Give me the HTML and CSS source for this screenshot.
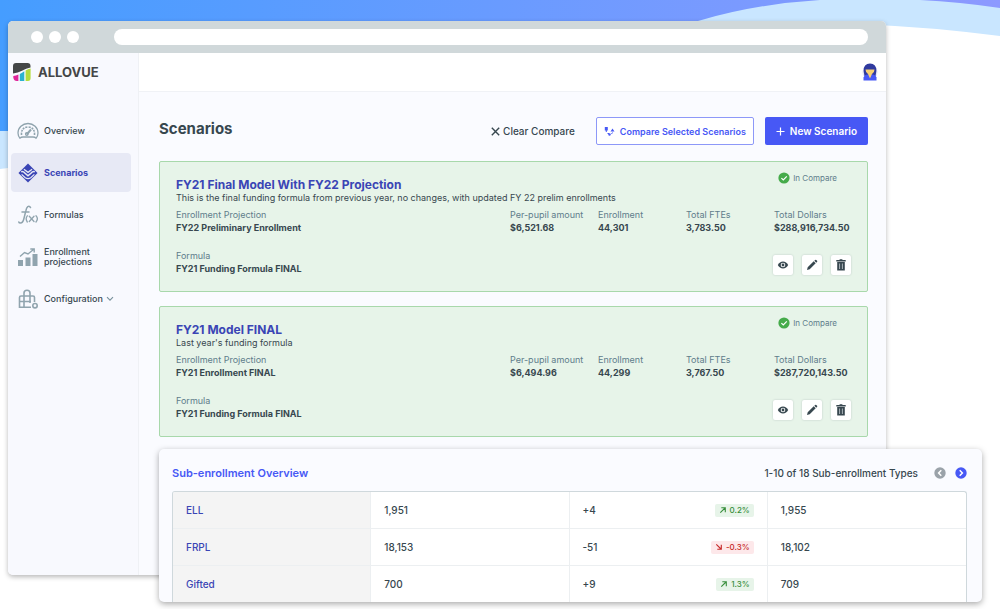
FILE: index.html
```html
<!DOCTYPE html>
<html lang="en">
<head>
<meta charset="utf-8">
<title>Allovue - Scenarios</title>
<link rel="stylesheet" href="styles.css">
</head>
<body>
<svg class="defs" width="0" height="0" aria-hidden="true">
  <symbol id="i-check" viewBox="0 0 12 12"><circle cx="6" cy="6" r="5.6" fill="#45ab4a"/><path d="M3.4 6.1l1.9 1.9 3.5-3.7" fill="none" stroke="#fff" stroke-width="1.2"/></symbol>
  <symbol id="i-eye" viewBox="0 0 12 12"><path d="M.8 6C2 3.700 3.800 2.500 6 2.500S10 3.700 11.200 6C10 8.300 8.200 9.500 6 9.500S2 8.300.8 6z" fill="#37474f"/><circle cx="6" cy="6" r="2.300" fill="#fff"/><circle cx="6" cy="6" r="1.400" fill="#37474f"/></symbol>
  <symbol id="i-pencil" viewBox="0 0 12 12"><path d="M1 11l.7-2.700 6-6 2 2-6 6zM8.300 1.700l.9-.8q.5-.4 1 0l.9.9q.5.5 0 1l-.8.900z" fill="#37474f"/></symbol>
  <symbol id="i-trash" viewBox="0 0 12 12"><path d="M1.300 1h3l.6-.7h2.200l.6.7h3v1.400H1.300z" fill="#37474f"/><path d="M2.200 3h7.600v8.500H2.200z" fill="#37474f"/><path d="M4.600 4.500v5.500M7.400 4.500v5.500" stroke="#b9c2c6" stroke-width=".9"/></symbol>
  <symbol id="i-up" viewBox="0 0 8 8"><path d="M1.300 6.700L6 2M2.300 1.800h4v4.400" fill="none" stroke="currentColor" stroke-width="1.100"/></symbol>
  <symbol id="i-down" viewBox="0 0 8 8"><path d="M1.300 1.300L6 6M2.300 6.200h4V1.800" fill="none" stroke="currentColor" stroke-width="1.100"/></symbol>
</svg>

<svg class="backdrop" viewBox="0 0 1000 180" preserveAspectRatio="none" aria-hidden="true">
  <defs><linearGradient id="sky" gradientUnits="userSpaceOnUse" x1="0" x2="1000" y1="0" y2="0"><stop offset="0" stop-color="#459dff"/><stop offset="1" stop-color="#8d99ff"/></linearGradient></defs>
  <path d="M0 0H1000V36Q930 27 860 24L600 100L8 168L0 169z" fill="#c9e6ff"/>
  <path d="M0 0H820Q755 4 698 21L500 100L8 131H0z" fill="url(#sky)"/>
  <path d="M920 0H1000V8Q960 2 920 0z" fill="url(#sky)"/>
</svg>

<div class="stage">
  <div class="window">
    <div class="chrome">
      <span class="dot"></span><span class="dot"></span><span class="dot"></span>
      <span class="address"></span>
    </div>
    <div class="app">
      <aside class="sidebar">
        <a class="logo" href="#">
          <svg width="18" height="18" viewBox="0 0 18 18" aria-hidden="true">
            <path d="M0 10.500V3Q0 0 3 0H14.500Q17.500 0 17.500 3V4.500Q13 5.500 9 7.800T0 10.500z" fill="#444647"/>
            <path d="M.3 13Q3 12.600 5.400 11.500V18H4Q.8 18 .3 14.500z" fill="#e0249a"/>
            <path d="M6.800 10.900Q9 9.800 11.300 8.300V18H6.800z" fill="#2bb3cf"/>
            <path d="M12.600 7.600Q15 6.200 17.600 5.600V15Q17.600 18 15 18H12.600z" fill="#b4dc3c"/>
          </svg>
          <span>ALLOVUE</span>
        </a>
        <nav class="nav">
          <a class="nav-item" href="#">
            <svg width="22" height="18" viewBox="0 0 22 18" aria-hidden="true" fill="none" stroke="#90a4ae" stroke-width="1.300">
              <path d="M3 16.200Q1 14 1 11A10 9.500 0 0 1 21 11Q21 14 19 16.200Q18 15 16 15H6Q4 15 3 16.200z"/>
              <path d="M4.500 13Q4 5.500 11 5Q18 5.500 17.500 13" stroke-width="1.600" stroke-dasharray="2 1"/>
              <path d="M9.700 12.500L14 7.500" stroke-width="2"/><circle cx="9.800" cy="12" r="1.300"/>
            </svg>
            <span>Overview</span>
          </a>
          <a class="nav-item active" href="#" aria-current="page">
            <svg width="22" height="20" viewBox="0 0 22 22" aria-hidden="true">
              <path d="M11 .5L21.500 11L11 21.500L.5 11z" fill="#3a45b5"/>
              <path d="M3.500 9.500Q6 9 7.500 11L11 14L14.500 11Q16 9 18.500 9.500" fill="none" stroke="#e7e9f5" stroke-width="1.700"/>
              <path d="M6.500 6.800L11 10.300L15.500 6.800" fill="none" stroke="#e7e9f5" stroke-width="1.400"/>
              <path d="M4 12.500L8 16.200Q11 18 14 16.200L18 12.500" fill="none" stroke="#e7e9f5" stroke-width="1.300"/>
            </svg>
            <span>Scenarios</span>
          </a>
          <a class="nav-item" href="#">
            <svg width="22" height="20" viewBox="0 0 22 20" aria-hidden="true" fill="none" stroke="#90a4ae" stroke-width="1.500" stroke-linecap="round">
              <path d="M13.500 2.500Q12.500 .8 10.800 1.600Q9.500 2.500 8.800 6L6.800 14Q5.800 18 3.500 18Q2 18 1.800 17M5 7H12"/>
              <path d="M10.300 10.800Q8 13.800 10.300 17M12.300 11.300L17 16.500M17 11.300L12.300 16.500M19 10.800Q21.800 13.800 19 17" stroke-width="1.300"/>
            </svg>
            <span>Formulas</span>
          </a>
          <a class="nav-item" href="#">
            <svg width="22" height="20" viewBox="0 0 22 20" aria-hidden="true" fill="#90a4ae">
              <path d="M1 13h5v6H1zM8.500 10.500h5V19h-5zM15.500 7h5v12h-5z"/>
              <path d="M3 9.500L7.500 5.500L11 7L16.500 2.500M13.300 2H17.200V5.500" fill="none" stroke="#90a4ae" stroke-width="1.400"/>
            </svg>
            <span>Enrollment projections</span>
          </a>
          <a class="nav-item" href="#">
            <svg width="22" height="20" viewBox="0 0 22 20" aria-hidden="true" fill="none" stroke="#90a4ae" stroke-width="1.600">
              <path d="M14 18.300H2.500V8.500Q2.500 7 4 7H16Q17.500 7 17.500 8.500V13M7 7V4Q7 1.200 10 1.200T13 4V7M2.500 12.500H14M7 18V7M13 14V7"/>
              <circle cx="18" cy="16.700" r="2.200"/>
            </svg>
            <span>Configuration</span>
            <svg class="chevron" width="8" height="6" viewBox="0 0 8 6" aria-hidden="true"><path d="M1 1.200L4 4.200L7 1.200" fill="none" stroke="#78909c" stroke-width="1.100"/></svg>
          </a>
        </nav>
      </aside>

      <div class="content">
        <header class="topbar">
          <button class="avatar" aria-label="Account">
            <svg width="16" height="18" viewBox="0 0 16 18" aria-hidden="true">
              <circle cx="8" cy="9" r="7.600" fill="#e4e6fa"/>
              <path d="M1.600 8Q1.500 .5 8 .5T14.400 8L13.500 13H2.500z" fill="#303a9e"/>
              <path d="M1.500 17.500V14.500Q2 12 5 11.500H11Q14 12 14.500 14.500V17.500z" fill="#4758f5"/>
              <path d="M3.500 6.500H12.500Q12.500 9.500 10 11L8 15.500L6 11Q3.500 9.500 3.500 6.500z" fill="#f6cf74"/>
            </svg>
          </button>
        </header>

        <main class="main">
          <div class="page-head">
            <h1>Scenarios</h1>
            <div class="actions">
              <button class="btn-text">
                <svg width="9" height="9" viewBox="0 0 9 9" aria-hidden="true"><path d="M.8 .8L8.200 8.200M8.200 .8L.8 8.200" stroke="#37474f" stroke-width="1.400"/></svg>
                Clear Compare
              </button>
              <button class="btn-outline">
                <svg width="11" height="11" viewBox="0 0 11 11" aria-hidden="true" fill="#4758f5"><path d="M.8 1h3v3.500h-3zM8.500 2.500L10.500 5.500H6.500z"/><path d="M2.300 4V6M7.500 8L8.500 6.500M3.500 7.500H5" stroke="#4758f5"/><circle cx="5.500" cy="8.500" r="1.200"/></svg>
                Compare Selected Scenarios
              </button>
              <button class="btn-primary">
                <svg width="9" height="9" viewBox="0 0 9 9" aria-hidden="true"><path d="M4.500 .5V8.500M.5 4.500H8.500" stroke="#fff" stroke-width="1.200"/></svg>
                New Scenario
              </button>
            </div>
          </div>

          <article class="card">
            <div class="card-head">
              <div class="card-title">
                <h2>FY21 Final Model With FY22 Projection</h2>
                <p>This is the final funding formula from previous year, no changes, with updated FY 22 prelim enrollments</p>
              </div>
              <span class="in-compare"><svg width="12" height="12"><use href="#i-check"/></svg>In Compare</span>
            </div>
            <dl class="stats">
              <div><dt>Enrollment Projection</dt><dd>FY22 Preliminary Enrollment</dd></div>
              <div><dt>Per-pupil amount</dt><dd>$6,521.68</dd></div>
              <div><dt>Enrollment</dt><dd>44,301</dd></div>
              <div><dt>Total FTEs</dt><dd>3,783.50</dd></div>
              <div><dt>Total Dollars</dt><dd>$288,916,734.50</dd></div>
            </dl>
            <div class="card-foot">
              <dl><dt>Formula</dt><dd>FY21 Funding Formula FINAL</dd></dl>
              <div class="tools">
                <button aria-label="View"><svg width="12" height="12"><use href="#i-eye"/></svg></button>
                <button aria-label="Edit"><svg width="12" height="12"><use href="#i-pencil"/></svg></button>
                <button aria-label="Delete"><svg width="12" height="12"><use href="#i-trash"/></svg></button>
              </div>
            </div>
          </article>

          <article class="card">
            <div class="card-head">
              <div class="card-title">
                <h2>FY21 Model FINAL</h2>
                <p>Last year's funding formula</p>
              </div>
              <span class="in-compare"><svg width="12" height="12"><use href="#i-check"/></svg>In Compare</span>
            </div>
            <dl class="stats">
              <div><dt>Enrollment Projection</dt><dd>FY21 Enrollment FINAL</dd></div>
              <div><dt>Per-pupil amount</dt><dd>$6,494.96</dd></div>
              <div><dt>Enrollment</dt><dd>44,299</dd></div>
              <div><dt>Total FTEs</dt><dd>3,767.50</dd></div>
              <div><dt>Total Dollars</dt><dd>$287,720,143.50</dd></div>
            </dl>
            <div class="card-foot">
              <dl><dt>Formula</dt><dd>FY21 Funding Formula FINAL</dd></dl>
              <div class="tools">
                <button aria-label="View"><svg width="12" height="12"><use href="#i-eye"/></svg></button>
                <button aria-label="Edit"><svg width="12" height="12"><use href="#i-pencil"/></svg></button>
                <button aria-label="Delete"><svg width="12" height="12"><use href="#i-trash"/></svg></button>
              </div>
            </div>
          </article>
        </main>
      </div>
    </div>
  </div>

  <section class="panel">
    <div class="panel-head">
      <h2>Sub-enrollment Overview</h2>
      <div class="pager">
        <span>1-10 of 18 Sub-enrollment Types</span>
        <button aria-label="Previous" disabled><svg width="12" height="12" viewBox="0 0 12 12"><circle cx="6" cy="6" r="5.700" fill="#9aa2a9"/><path d="M7.300 3.300L4.600 6L7.300 8.700" fill="none" stroke="#fff" stroke-width="1.500"/></svg></button>
        <button aria-label="Next"><svg width="12" height="12" viewBox="0 0 12 12"><circle cx="6" cy="6" r="5.700" fill="#4758f5"/><path d="M4.700 3.300L7.400 6L4.700 8.700" fill="none" stroke="#fff" stroke-width="1.500"/></svg></button>
      </div>
    </div>
    <div class="table-frame">
      <table>
        <tbody>
          <tr><th scope="row">ELL</th><td>1,951</td><td><div class="change">+4<span class="tag up"><svg width="8" height="8"><use href="#i-up"/></svg>0.2%</span></div></td><td>1,955</td></tr>
          <tr><th scope="row">FRPL</th><td>18,153</td><td><div class="change">-51<span class="tag down"><svg width="8" height="8"><use href="#i-down"/></svg>-0.3%</span></div></td><td>18,102</td></tr>
          <tr><th scope="row">Gifted</th><td>700</td><td><div class="change">+9<span class="tag up"><svg width="8" height="8"><use href="#i-up"/></svg>1.3%</span></div></td><td>709</td></tr>
        </tbody>
      </table>
    </div>
  </section>
</div>
</body>
</html>
```
FILE: styles.css
```css
* { box-sizing: border-box; }
body {
  margin: 0;
  background: #fff;
  color: #37474f;
  font-family: Inter, "Liberation Sans", sans-serif;
  font-size: 9px;
}
h1, h2, p, dl, dd { margin: 0; }
a { color: inherit; text-decoration: none; }
button {
  display: flex;
  align-items: center;
  justify-content: center;
  margin: 0;
  padding: 0;
  border: 0;
  background: none;
  color: inherit;
  font: inherit;
}
svg { display: block; flex: none; }
.defs { position: absolute; }
.backdrop { position: absolute; top: 0; left: 0; width: 100%; height: 180px; }

.stage { position: relative; padding: 21px 114px 34px 8px; }

.window {
  border-radius: 5px;
  overflow: hidden;
  background: #fafbff;
  box-shadow: 0 2px 5px rgba(0, 0, 0, .28);
}
.chrome {
  display: flex;
  align-items: center;
  gap: 6px;
  height: 32px;
  padding: 0 18px 0 23px;
  background: #d0d8da;
}
.dot { width: 12px; height: 12px; border-radius: 50%; background: #fff; }
.address { flex: 1; height: 16px; margin-left: 29px; border-radius: 8px; background: #fff; }

.app { display: flex; }
.sidebar { width: 131px; padding: 10px 7px 0 3px; background: #f8f9fe; border-right: 1px solid #eff1f5; }
.logo { display: flex; align-items: center; gap: 7px; padding-left: 2px; color: #444647; font-size: 13px; font-weight: 700; line-height: 18px; }
.nav { display: flex; flex-direction: column; gap: 3px; margin-top: 30px; }
.nav-item { display: flex; align-items: center; gap: 5px; height: 39px; padding-left: 6px; border-radius: 4px; font-size: 9px; font-weight: 500; line-height: 10px; }
.nav-item.active { background: #e7e9f5; color: #3a45b5; font-weight: 700; }
.chevron { margin-left: -2px; }

.content { flex: 1; min-width: 0; }
.topbar { display: flex; align-items: center; justify-content: flex-end; height: 39px; padding: 0 8px; background: #fff; border-bottom: 1px solid #f0f2f6; }
.main { padding: 25px 18px 138px 20px; }

.page-head { display: flex; align-items: center; justify-content: space-between; margin-bottom: 16px; }
h1 { font-size: 15px; font-weight: 700; line-height: 24px; padding-bottom: 4px; }
.actions { display: flex; align-items: center; }
.btn-text { gap: 3px; margin-right: 21px; font-size: 10px; font-weight: 500; }
.btn-outline, .btn-primary { height: 28px; border-radius: 2px; font-weight: 600; }
.btn-outline { gap: 5px; margin-right: 11px; padding: 0 7px; background: #fff; border: 1px solid #8d98f8; color: #4758f5; font-size: 9px; }
.btn-primary { gap: 5px; padding: 0 11px; background: #4758f5; color: #fff; font-size: 10px; }

.card { padding: 10px 16px 16px; background: #e7f4e9; border: 1px solid #a8d8ab; border-radius: 2px; }
.card + .card { margin-top: 14px; }
.card-head { display: flex; align-items: flex-start; justify-content: space-between; }
.card-title { padding-top: 5px; }
.card h2 { color: #3a45b5; font-size: 12px; font-weight: 700; line-height: 16px; }
.card p { font-size: 9px; line-height: 10px; }
.in-compare { display: flex; align-items: center; gap: 3px; margin-right: 14px; color: #607d8b; font-size: 8px; line-height: 12px; }
.stats { display: grid; grid-template-columns: 1fr 88px 88px 88px 77px; margin-top: 5px; }
dt { color: #607d8b; font-size: 9px; line-height: 13px; }
dd { font-size: 9px; font-weight: 700; line-height: 13px; }
.card-foot { display: flex; align-items: flex-end; justify-content: space-between; margin-top: 15px; }
.tools { display: flex; gap: 9px; }
.tools button { width: 20px; height: 20px; background: #fff; border-radius: 2px; box-shadow: 0 0 2px rgba(55, 71, 79, .25); }

.panel {
  position: absolute;
  top: 449px;
  left: 159px;
  right: 18px;
  padding: 12px 15px 0 13px;
  overflow: hidden;
  background: #fafbff;
  border-radius: 5px;
  box-shadow: 0 2px 6px rgba(0, 0, 0, .34);
}
.panel-head { display: flex; align-items: center; justify-content: space-between; height: 24px; margin-bottom: 6px; }
.panel-head h2 { color: #4758f5; font-size: 11px; font-weight: 600; }
.pager { display: flex; align-items: center; gap: 9px; font-size: 10px; font-weight: 500; }
.pager span { margin-right: 7px; }
.table-frame { border: 1px solid #cfd8dc; border-bottom: 0; border-radius: 3px 3px 0 0; overflow: hidden; background: #fff; }
table { width: 100%; table-layout: fixed; border-collapse: separate; border-spacing: 0; }
th, td { height: 37px; padding: 0 13px; border-bottom: 1px solid #eceff1; text-align: left; font-size: 10px; font-weight: 500; line-height: 14px; }
th, td:not(:last-child) { border-right: 1px solid #eceff1; }
tr:last-child > * { height: 36px; border-bottom: 0; }
th { background: #f4f4f4; color: #3a45b5; }
.change { display: flex; align-items: center; justify-content: space-between; }
.tag { display: flex; align-items: center; gap: 3px; padding: 0 4px; border-radius: 2px; font-size: 8px; line-height: 13px; }
.up { background: #e7f4e9; color: #388e3c; }
.down { background: #fde8ea; color: #c62828; }
```
